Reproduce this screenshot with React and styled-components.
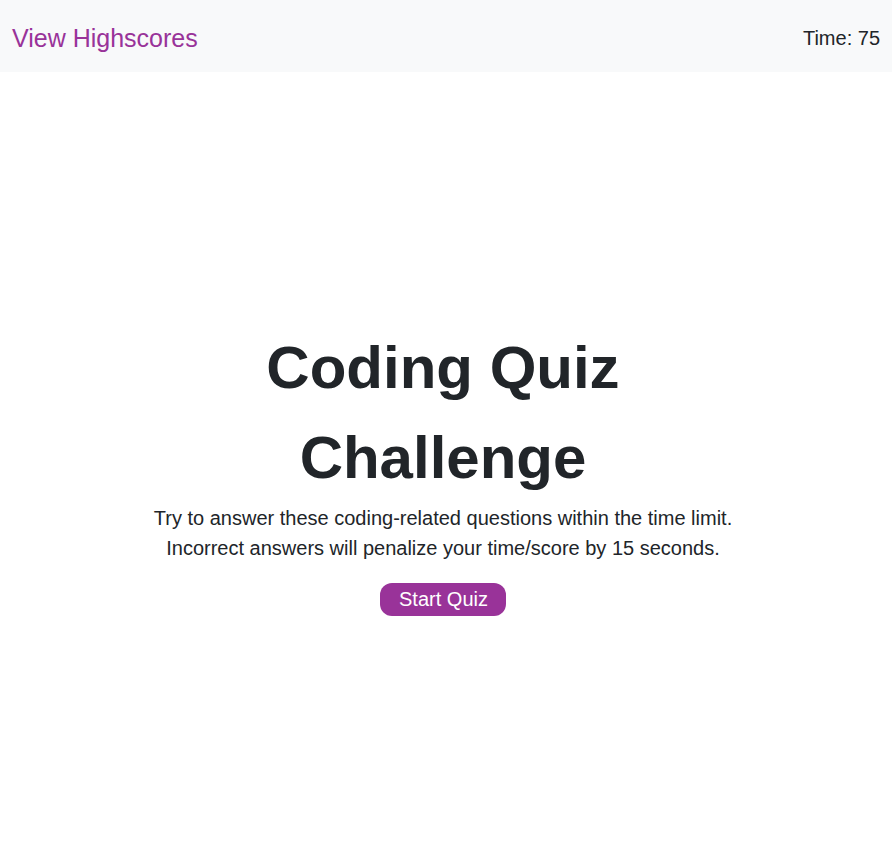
import React from "react";
import styled, { createGlobalStyle } from "styled-components";

const Global = createGlobalStyle`
  html, body { margin: 0; padding: 0; background: #ffffff; }
  body {
    font-family: "Liberation Sans", Arial, sans-serif;
    color: #212529;
  }
  * { box-sizing: border-box; }
`;

const Header = styled.header`
  display: flex;
  justify-content: space-between;
  align-items: center;
  height: 72px;
  padding: 5px 12px 0 12px;
  background: #f8f9fa;
`;

const HighscoreLink = styled.a`
  font-size: 25px;
  color: #993399;
  text-decoration: none;
  cursor: pointer;
`;

const Timer = styled.div`
  font-size: 20px;
  color: #212529;
`;

const Main = styled.main`
  display: flex;
  flex-direction: column;
  align-items: center;
  padding: 251px 6px 0 0;
  text-align: center;
`;

const Title = styled.h1`
  margin: 0;
  width: 446px;
  font-size: 60px;
  line-height: 90px;
  font-weight: 700;
  color: #212529;
`;

const Intro = styled.p`
  margin: 0;
  font-size: 20px;
  line-height: 30px;
  color: #212529;
`;

const StartButton = styled.button`
  margin-top: 20px;
  height: 33px;
  padding: 0 18px 0 19px;
  border: none;
  border-radius: 12px;
  background: #993399;
  color: #ffffff;
  font-family: "Liberation Sans", Arial, sans-serif;
  font-size: 20px;
  line-height: 33px;
  cursor: pointer;
`;

export default function App() {
  return (
    <>
      <Global />
      <Header>
        <HighscoreLink>View Highscores</HighscoreLink>
        <Timer>Time: 75</Timer>
      </Header>
      <Main>
        <Title>Coding Quiz Challenge</Title>
        <Intro>
          Try to answer these coding-related questions within the time limit.
          <br />
          Incorrect answers will penalize your time/score by 15 seconds.
        </Intro>
        <StartButton>Start Quiz</StartButton>
      </Main>
    </>
  );
}
